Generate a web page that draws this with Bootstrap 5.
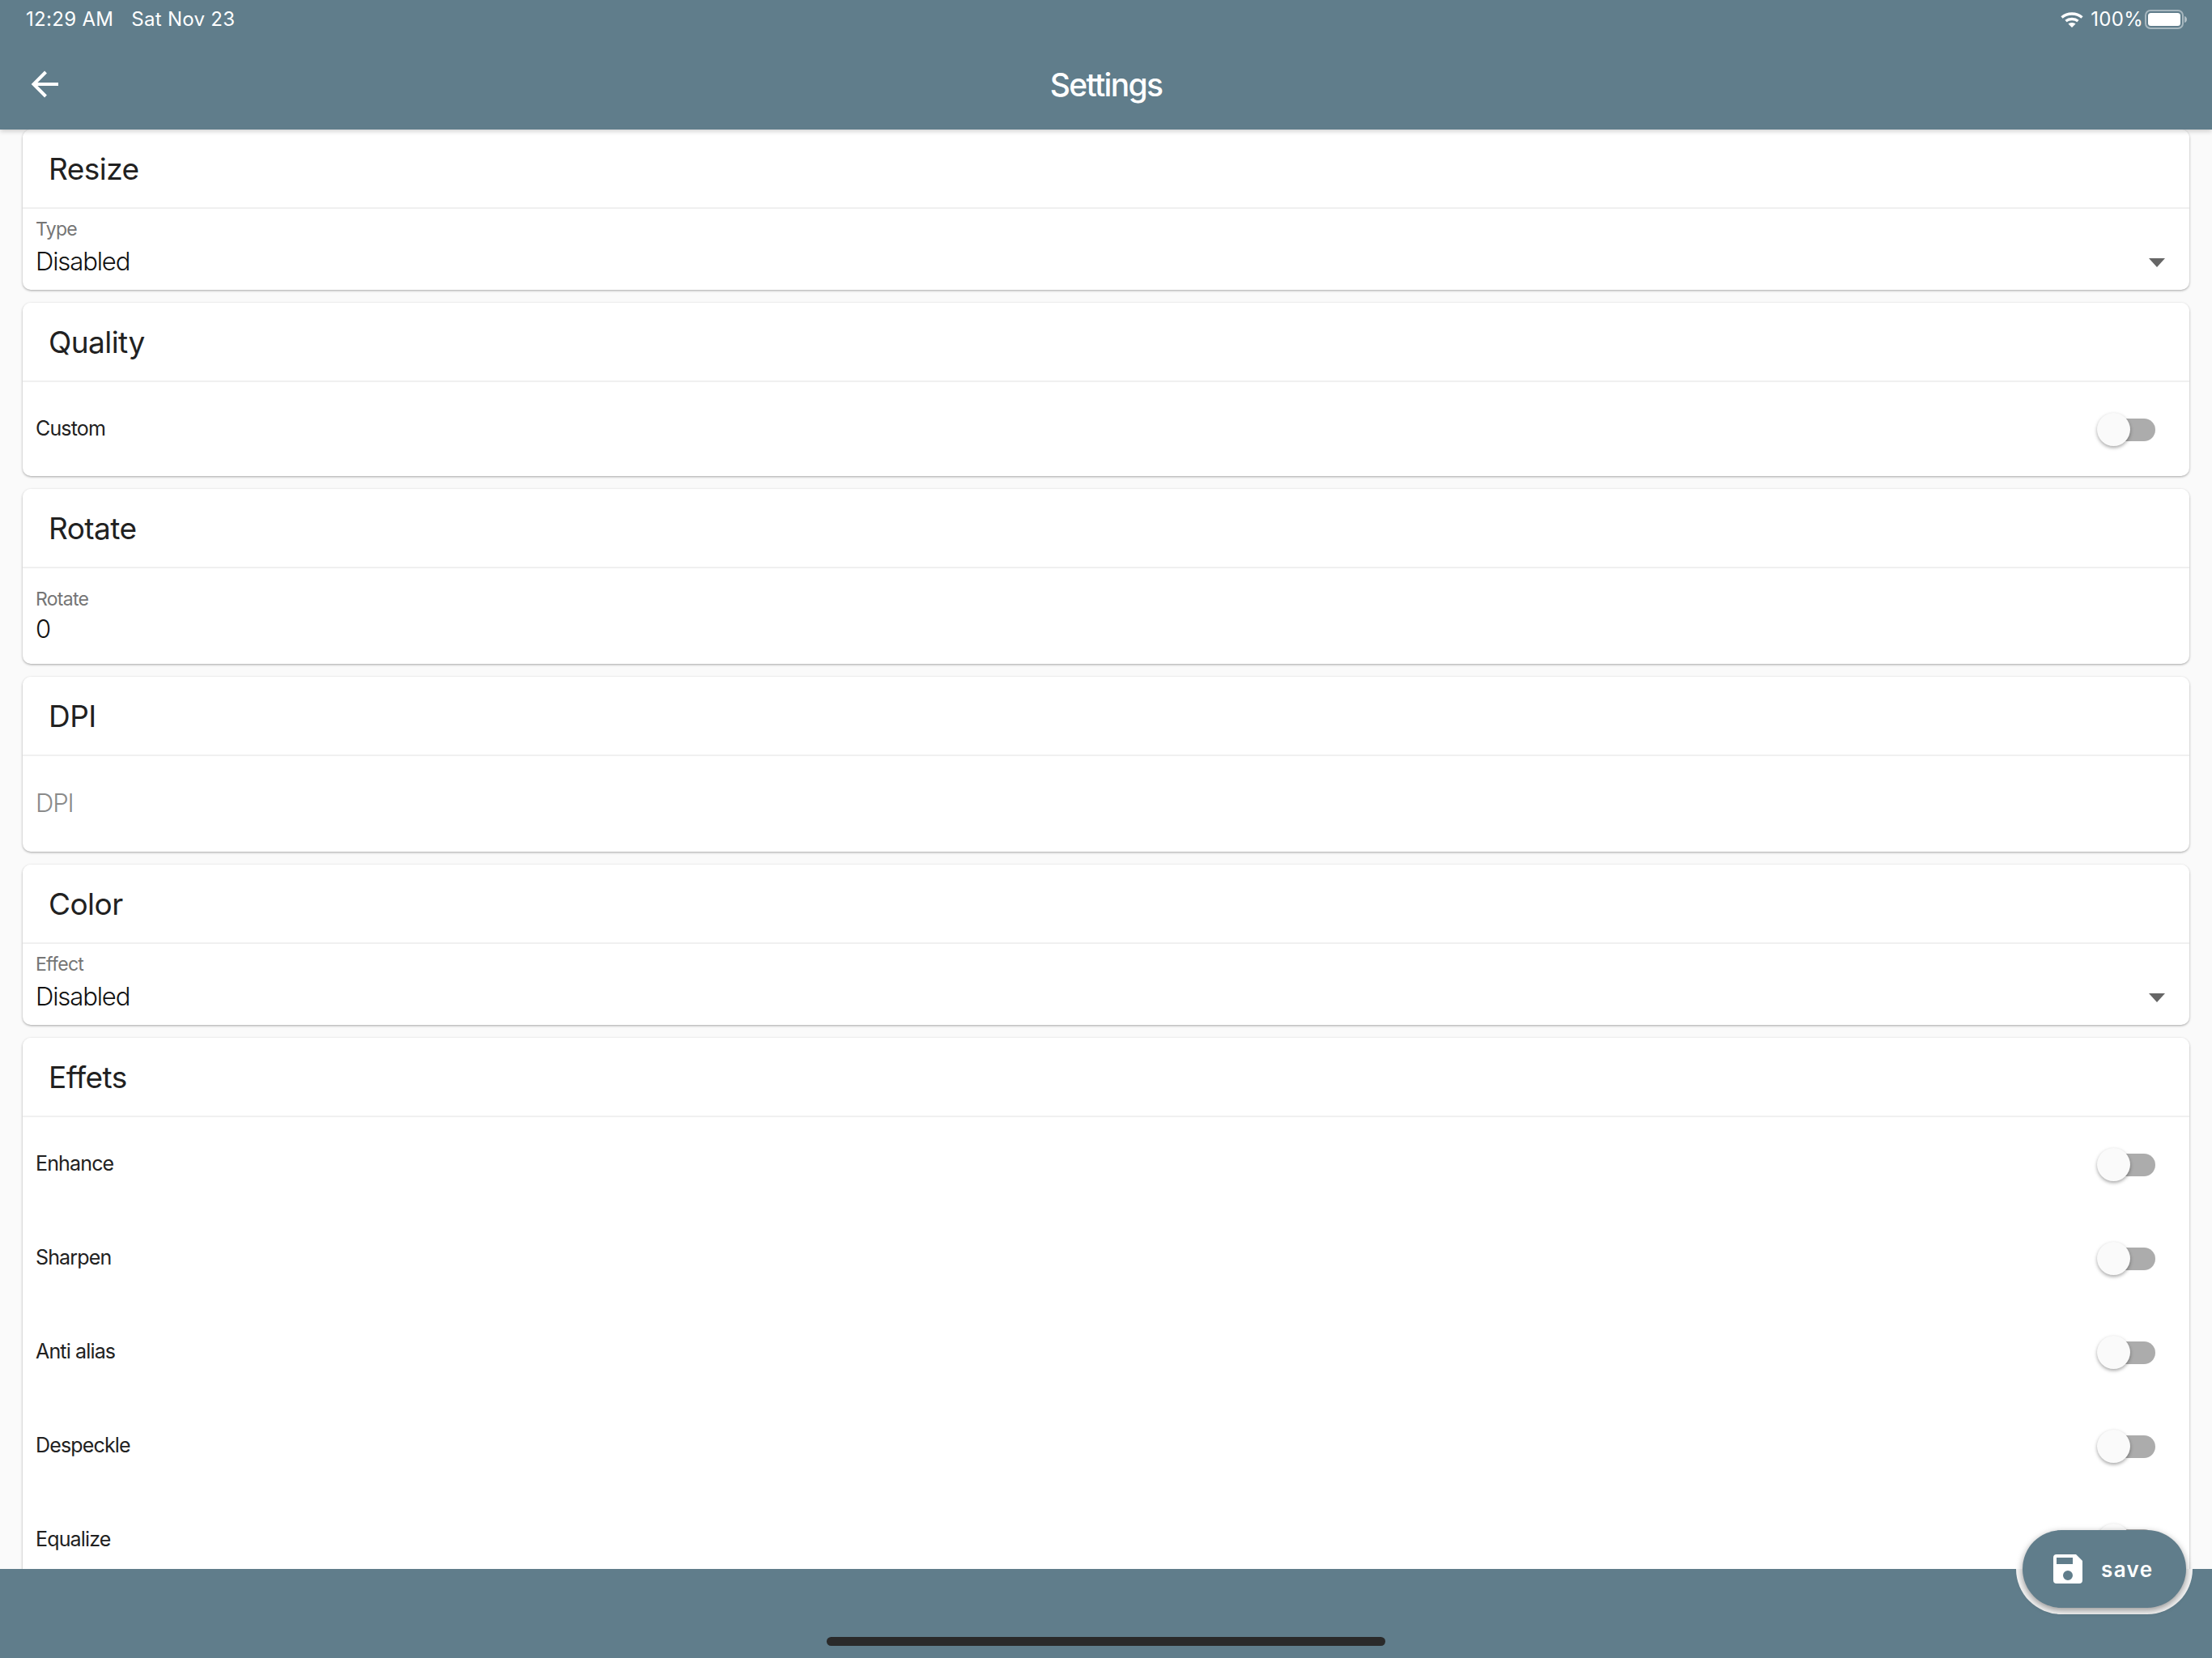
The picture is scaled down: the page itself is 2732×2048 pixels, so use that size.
<!DOCTYPE html>
<html lang="en">
<head>
<meta charset="utf-8">
<title>Settings</title>
<link href="https://cdn.jsdelivr.net/npm/bootstrap@5.3.0/dist/css/bootstrap.min.css" rel="stylesheet">
<style>
html,body{height:2048px;overflow:hidden}
body{font-family:Inter,"Noto Sans",sans-serif;background:#fafafa;color:#212121}
.app-shell{height:2048px;position:relative}
.app-head{height:160px;background:#607d8b;color:#fff;flex:none;z-index:3;box-shadow:0 2px 6px rgba(0,0,0,.2);position:relative}
.stat-bar{height:48px;padding:0 29px 0 32px;font-size:24px;letter-spacing:.3px}
.stat-bar .stat-gap{margin-left:22px}
.stat-right{gap:9px}
.stat-right .batt{margin-left:-7px}
.title-bar{height:112px;padding:0 40px}
.back-arrow{position:absolute;left:38px;top:38px}
.page-title{font-size:39px;font-weight:500;letter-spacing:-1.7px;line-height:1}
.scroll-area{flex:1 1 0;overflow:hidden;padding:0 28px;min-height:0}
.set-card{border:0;border-radius:10px;box-shadow:0 1px 3px rgba(0,0,0,.35);margin-bottom:16px;background:#fff;flex:none}
.set-card .card-header{height:98px;background:#fff;border-bottom:2px solid #f0f0f0;padding:0 33px 0 32px;font-size:37px;letter-spacing:-.55px;line-height:1;border-radius:10px 10px 0 0;color:#212121}
.set-card .card-body{padding:0 0 0 16px}
.sel-row{height:100px;padding:10px 30px 0 0}
.inp-row{height:118px;padding:23px 0 0}
.inp-row .f-value{margin-top:-3px}
.tog-row{height:116px;padding-right:42px;font-size:25px;letter-spacing:-.85px}
.f-label{font-size:23px;line-height:30px;color:#757575;letter-spacing:-.7px}
.f-value{font-size:31px;line-height:50px;letter-spacing:-1.1px;font-weight:300;color:#111}
.f-ph{font-size:31px;line-height:68px;color:#8a8a8a;letter-spacing:-1.1px;font-weight:300;height:118px;padding-top:24px}
.caret-down{width:0;height:0;border-left:10px solid transparent;border-right:10px solid transparent;border-top:11px solid #666;margin-top:51px}
.tog{width:72px;height:42px;position:relative;flex:none}
.tog::before{content:"";position:absolute;left:12px;right:0;top:8px;height:28px;border-radius:14px;background:#acacac}
.tog::after{content:"";position:absolute;left:0;top:1px;width:41px;height:41px;border-radius:50%;background:#fafafa;box-shadow:0 2px 4px rgba(0,0,0,.35)}
.app-foot{height:110px;background:#607d8b;flex:none;z-index:2;position:relative;overflow:hidden}
.home-bar{position:absolute;left:1021px;top:84px;width:690px;height:11px;border-radius:6px;background:#2a2a2a}
.fab-notch{position:absolute;left:2490px;top:-56px;width:218px;height:112px;border-radius:56px;background:#f4f4f4}
.save-fab{position:absolute;left:2498px;top:1890px;width:202px;height:96px;border-radius:48px;background:#607d8b;color:#fff;border:0;z-index:4;font-size:26px;font-weight:600;letter-spacing:1.4px;padding:0 0 0 38px;box-shadow:0 3px 8px rgba(0,0,0,.4)}
.save-fab:hover{background:#607d8b;color:#fff}
.save-fab svg{width:36px;height:36px;margin-right:23px;flex:none}
</style>
</head>
<body>
<div class="app-shell d-flex flex-column">
  <header class="app-head">
    <div class="stat-bar d-flex align-items-center justify-content-between">
      <div><span>12:29 AM</span><span class="stat-gap">Sat Nov 23</span></div>
      <div class="stat-right d-flex align-items-center">
        <svg width="28" height="20" viewBox="0 0 28 20" fill="none" stroke="#fff" stroke-width="3.4"><path d="M1.5 7.5C8.5 1.5 19.5 1.5 26.5 7.5"/><path d="M6.5 12C10.5 8.7 17.5 8.7 21.5 12"/><path d="M9.5 15.5 14 20l4.500-4.500c-2.500-2-6.500-2-9 0z" fill="#fff" stroke="none"/></svg>
        <span>100%</span>
        <svg class="batt" width="54" height="24" viewBox="0 0 54 24" fill="none"><rect x="1" y="1" width="46" height="22" rx="6" stroke="#fff" stroke-opacity=".45" stroke-width="2"/><rect x="4" y="4" width="40" height="16" rx="3.500" fill="#fff"/><path d="M49 8c2 .5 3 2 3 4s-1 3.500-3 4z" fill="#fff" fill-opacity=".5"/></svg>
      </div>
    </div>
    <div class="title-bar position-relative d-flex align-items-center justify-content-center">
      <svg class="back-arrow" width="36" height="36" viewBox="0 0 36 36" fill="none" stroke="#fff" stroke-width="4"><path d="M5 18H34"/><path d="M18.500 3 3.500 18l15 15"/></svg>
      <div class="page-title">Settings</div>
    </div>
  </header>
  <main class="scroll-area d-flex flex-column">
    <section class="card set-card">
      <div class="card-header d-flex align-items-center">Resize</div>
      <div class="card-body">
        <div class="sel-row d-flex justify-content-between"><div><div class="f-label">Type</div><div class="f-value">Disabled</div></div><div class="caret-down"></div></div>
      </div>
    </section>
    <section class="card set-card">
      <div class="card-header d-flex align-items-center">Quality</div>
      <div class="card-body">
        <div class="tog-row d-flex align-items-center justify-content-between"><span>Custom</span><span class="tog"></span></div>
      </div>
    </section>
    <section class="card set-card">
      <div class="card-header d-flex align-items-center">Rotate</div>
      <div class="card-body">
        <div class="inp-row"><div class="f-label">Rotate</div><div class="f-value">0</div></div>
      </div>
    </section>
    <section class="card set-card">
      <div class="card-header d-flex align-items-center">DPI</div>
      <div class="card-body"><div class="f-ph">DPI</div></div>
    </section>
    <section class="card set-card">
      <div class="card-header d-flex align-items-center">Color</div>
      <div class="card-body">
        <div class="sel-row d-flex justify-content-between"><div><div class="f-label">Effect</div><div class="f-value">Disabled</div></div><div class="caret-down"></div></div>
      </div>
    </section>
    <section class="card set-card">
      <div class="card-header d-flex align-items-center">Effets</div>
      <div class="card-body">
        <div class="tog-row d-flex align-items-center justify-content-between"><span>Enhance</span><span class="tog"></span></div>
        <div class="tog-row d-flex align-items-center justify-content-between"><span>Sharpen</span><span class="tog"></span></div>
        <div class="tog-row d-flex align-items-center justify-content-between"><span>Anti alias</span><span class="tog"></span></div>
        <div class="tog-row d-flex align-items-center justify-content-between"><span>Despeckle</span><span class="tog"></span></div>
        <div class="tog-row d-flex align-items-center justify-content-between"><span>Equalize</span><span class="tog"></span></div>
      </div>
    </section>
  </main>
  <footer class="app-foot"><div class="fab-notch"></div><div class="home-bar"></div></footer>
  <button type="button" class="btn save-fab d-flex align-items-center">
    <svg viewBox="3 3 18 18" fill="#fff"><path d="M17 3H5a2 2 0 0 0-2 2v14a2 2 0 0 0 2 2h14a2 2 0 0 0 2-2V7l-4-4zm-5 16a3 3 0 1 1 0-6 3 3 0 0 1 0 6zm3-10H5V5h10v4z"/></svg>
    <span>save</span>
  </button>
</div>
<script src="https://cdn.jsdelivr.net/npm/bootstrap@5.3.0/dist/js/bootstrap.bundle.min.js"></script>
</body>
</html>
